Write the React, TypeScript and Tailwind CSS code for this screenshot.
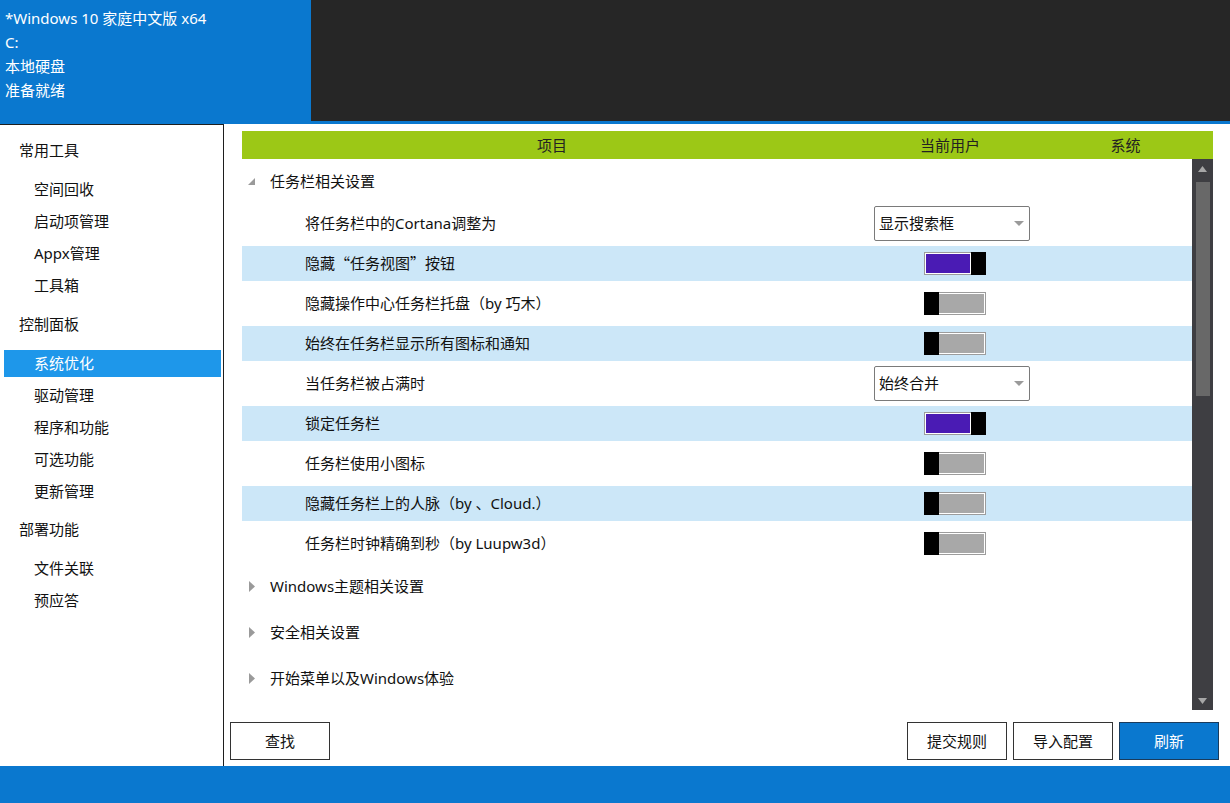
import React from "react";

const FONT = { fontFamily: "'Noto Sans','Noto Sans CJK SC',sans-serif" };
const CJK = { fontFamily: "'Noto Sans CJK SC',sans-serif" };

type Row = { label: React.ReactNode; key: string; kind: "select" | "toggle"; value?: string; on?: boolean; hl?: boolean };

const rows: Row[] = [
  { key: "a", label: "将任务栏中的Cortana调整为", kind: "select", value: "显示搜索框" },
  {
    key: "b",
    label: (
      <>
        隐藏<span style={CJK}>“任务视图”</span>按钮
      </>
    ),
    kind: "toggle",
    on: true,
    hl: true,
  },
  { key: "c", label: "隐藏操作中心任务栏托盘（by 巧木）", kind: "toggle", on: false },
  { key: "d", label: "始终在任务栏显示所有图标和通知", kind: "toggle", on: false, hl: true },
  { key: "e", label: "当任务栏被占满时", kind: "select", value: "始终合并" },
  { key: "f", label: "锁定任务栏", kind: "toggle", on: true, hl: true },
  { key: "g", label: "任务栏使用小图标", kind: "toggle", on: false },
  { key: "h", label: "隐藏任务栏上的人脉（by 、Cloud.）", kind: "toggle", on: false, hl: true },
  { key: "i", label: "任务栏时钟精确到秒（by Luupw3d）", kind: "toggle", on: false },
];

function Toggle({ on }: { on: boolean }) {
  if (on) {
    return (
      <div className="flex h-[23px] w-[62px]">
        <div className="flex-1 border border-r-0 border-[#9c9c9c] bg-white p-[1px]">
          <div className="h-full w-full bg-[#4a1bb4]" />
        </div>
        <div className="h-full w-[15px] bg-black" />
      </div>
    );
  }
  return (
    <div className="flex h-[23px] w-[62px]">
      <div className="h-full w-[15px] bg-black" />
      <div className="flex-1 border border-l-0 border-[#9c9c9c] bg-white py-[1px] pr-[1px]">
        <div className="h-full w-full bg-[#a8a8a8]" />
      </div>
    </div>
  );
}

function Select({ value }: { value: string }) {
  return (
    <div className="flex h-[35px] w-[156px] items-center justify-between rounded-[2px] border border-[#7a7a7a] bg-white pl-[4px] pr-[5px] text-[15px] text-[#111]">
      <span>{value}</span>
      <svg width="10" height="5" viewBox="0 0 10 5">
        <polygon points="0,0 10,0 5,5" fill="#9a9a9a" />
      </svg>
    </div>
  );
}

const sidebar: { title: string; items: string[] }[] = [
  { title: "常用工具", items: ["空间回收", "启动项管理", "Appx管理", "工具箱"] },
  { title: "控制面板", items: ["系统优化", "驱动管理", "程序和功能", "可选功能", "更新管理"] },
  { title: "部署功能", items: ["文件关联", "预应答"] },
];

function CollapsedGroup({ label }: { label: string }) {
  return (
    <div className="flex h-[46px] items-center">
      <div className="flex w-[28px] justify-start pl-[7px]">
        <svg width="6" height="11" viewBox="0 0 6 11">
          <polygon points="0,0 6,5.5 0,11" fill="#9a9a9a" />
        </svg>
      </div>
      <span className="text-[15px] text-[#111]">{label}</span>
    </div>
  );
}

export default function App() {
  return (
    <div className="flex h-[803px] w-[1230px] flex-col overflow-hidden bg-white" style={FONT}>
      {/* header */}
      <div className="flex h-[124px] shrink-0">
        <div className="flex w-[311px] flex-col bg-[#0a78cf] pl-[5px] pt-[6px] text-[15px] leading-[24px] text-white">
          <div>*Windows 10 家庭中文版 x64</div>
          <div>C:</div>
          <div>本地硬盘</div>
          <div>准备就绪</div>
        </div>
        <div className="flex flex-1 flex-col">
          <div className="flex-1 bg-[#262626]" />
          <div className="h-[3px] bg-[#0a78cf]" />
        </div>
      </div>

      {/* body */}
      <div className="flex h-[642px] shrink-0">
        {/* sidebar */}
        <div className="flex w-[224px] shrink-0 flex-col border-r border-t border-[#1e1e1e] pt-[9px] text-[15px] text-[#111]">
          {sidebar.map((g, gi) => (
            <div key={g.title} className={gi === 0 ? "" : gi === 1 ? "mt-[8px]" : "mt-[7px]"}>
              <div className="mb-[6px] flex h-[32px] items-center pl-[19px]">{g.title}</div>
              {g.items.map((it) => {
                const sel = it === "系统优化";
                return (
                  <div key={it} className="flex h-[32px] items-center pl-[4px] pr-[2px]">
                    <div
                      className={
                        "mt-[2px] flex h-[27px] w-full items-center pl-[30px] " +
                        (sel ? "bg-[#1e97ea] text-white" : "")
                      }
                    >
                      {it}
                    </div>
                  </div>
                );
              })}
            </div>
          ))}
        </div>

        {/* main */}
        <div className="flex min-w-0 flex-1 flex-col pt-[7px]">
          <div className="ml-[18px] mr-[17px] flex h-[28px] shrink-0 items-center bg-[#9cc816] text-[15px] text-[#222]">
            <div className="w-[620px] text-center">项目</div>
            <div className="w-[176px] text-center">当前用户</div>
            <div className="flex-1 text-center">系统</div>
          </div>

          <div className="ml-[18px] mr-[17px] flex h-[551px] shrink-0">
            {/* rows */}
            <div className="flex-1 overflow-hidden">
              <div className="flex h-[44px] items-center">
                <div className="flex w-[28px] justify-start pl-[6px]">
                  <svg width="7" height="7" viewBox="0 0 7 7">
                    <polygon points="7,0 7,7 0,7" fill="#9a9a9a" />
                  </svg>
                </div>
                <span className="text-[15px] text-[#111]">任务栏相关设置</span>
              </div>
              {rows.map((r) => (
                <div key={r.key} className="h-[40px] py-[2.5px]">
                  <div className={"flex h-[35px] items-center " + (r.hl ? "bg-[#cce7f8]" : "")}>
                    <div className="w-[620px] pl-[63px] text-[15px] text-[#111]">{r.label}</div>
                    {r.kind === "select" ? (
                      <div className="pl-[12px]">
                        <Select value={r.value || ""} />
                      </div>
                    ) : (
                      <div className="pl-[62px]">
                        <Toggle on={!!r.on} />
                      </div>
                    )}
                  </div>
                </div>
              ))}
              <CollapsedGroup label="Windows主题相关设置" />
              <CollapsedGroup label="安全相关设置" />
              <CollapsedGroup label="开始菜单以及Windows体验" />
            </div>
            {/* scrollbar */}
            <div className="flex w-[21px] flex-col items-center bg-[#3e3e42] pt-[7px] pb-[6px]">
              <svg width="9" height="6" viewBox="0 0 9 6">
                <polygon points="4.5,0 9,6 0,6" fill="#a6a6a6" />
              </svg>
              <div className="mt-[10px] h-[214px] w-[14px] bg-[#686868]" />
              <div className="flex-1" />
              <svg width="9" height="6" viewBox="0 0 9 6">
                <polygon points="0,0 9,0 4.5,6" fill="#a6a6a6" />
              </svg>
            </div>
          </div>

          {/* buttons */}
          <div className="flex items-start pt-[12px] pl-[6px] pr-[11px] text-[15px]">
            <button className="flex h-[38px] w-[100px] items-center justify-center border border-[#333] bg-white text-[#111]">
              查找
            </button>
            <div className="flex-1" />
            <div className="flex gap-[6px]">
              <button className="flex h-[38px] w-[100px] items-center justify-center border border-[#333] bg-white text-[#111]">
                提交规则
              </button>
              <button className="flex h-[38px] w-[100px] items-center justify-center border border-[#333] bg-white text-[#111]">
                导入配置
              </button>
              <button className="flex h-[38px] w-[100px] items-center justify-center border border-[#1a3b5c] bg-[#0a78cf] text-white">
                刷新
              </button>
            </div>
          </div>
        </div>
      </div>

      {/* footer */}
      <div className="h-[37px] shrink-0 bg-[#0a78cf]" />
    </div>
  );
}
